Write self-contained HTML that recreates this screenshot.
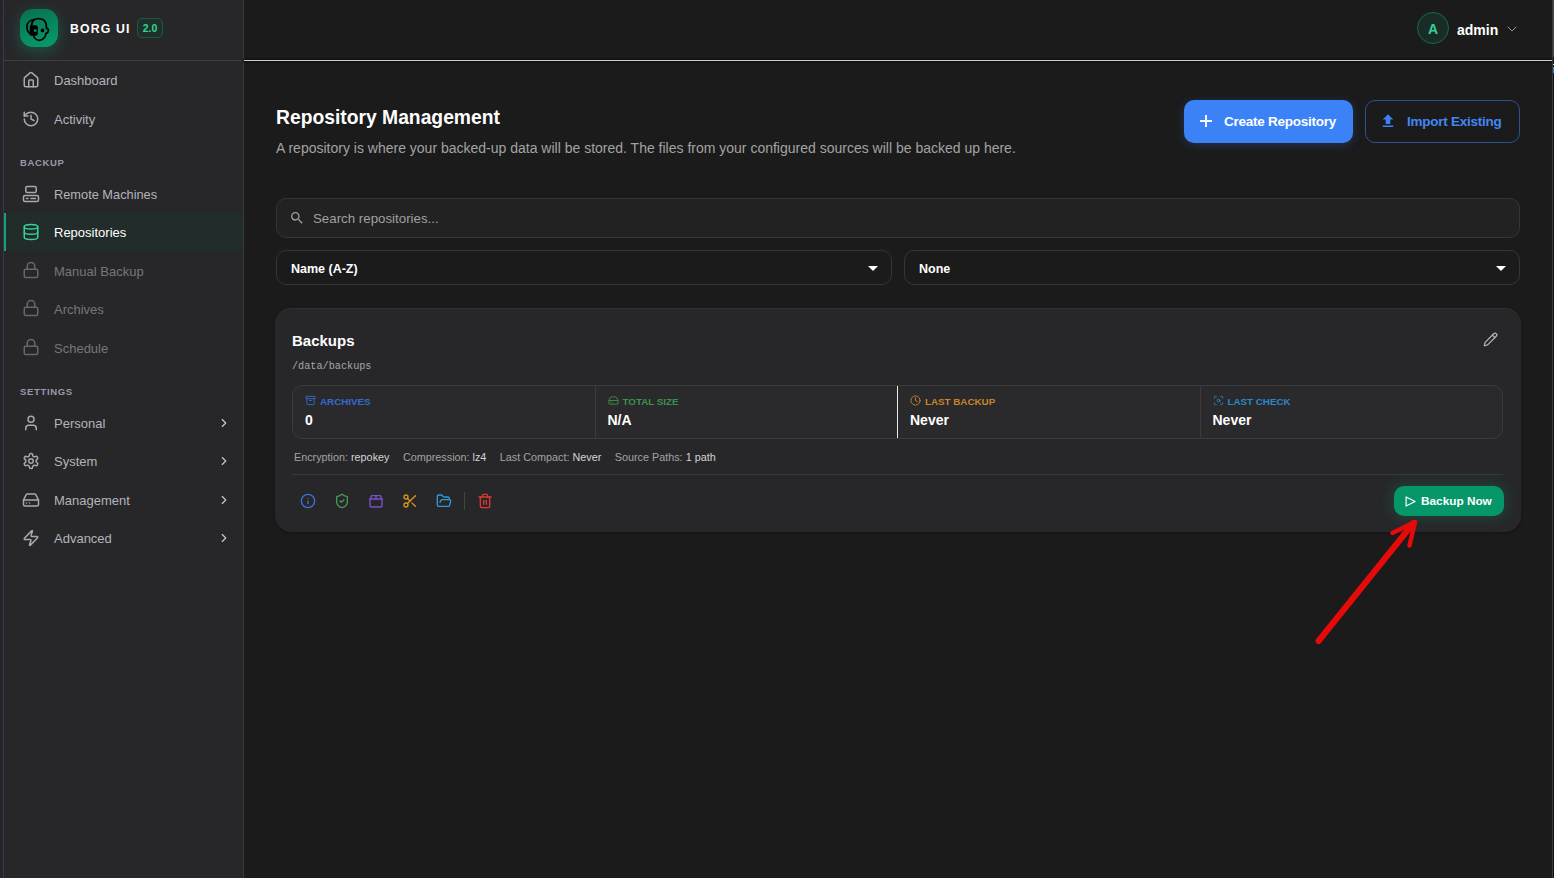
<!DOCTYPE html>
<html><head><meta charset="utf-8">
<style>
*{box-sizing:border-box;margin:0;padding:0}
html,body{width:1554px;height:878px;overflow:hidden;background:#1b1b1b;font-family:"Liberation Sans",sans-serif;color:#e5e5e5}
.abs{position:absolute}
#strip{left:0;top:0;width:3px;height:878px;background:#26252e}
#sidebar{left:3px;top:0;width:241px;height:878px;background:#27272a;border-left:1px solid #3a3a40;border-right:1px solid #3b3b3e}
#sbline{left:4px;top:60px;width:239px;height:1px;background:#3e3e42}
.logo{left:20px;top:9px;width:38px;height:38px;border-radius:12.5px;background:linear-gradient(160deg,#07704f,#079d6d);box-shadow:0 4px 14px 1px rgba(16,170,115,.3)}
.brand{left:70px;top:22px;font-size:12.3px;font-weight:700;letter-spacing:1.15px;color:#fff;line-height:14px}
.badge{left:137px;top:18px;width:26px;height:20px;border-radius:5px;background:#1f302b;border:1px solid #1d5a44;color:#34d399;font-size:10.5px;font-weight:700;text-align:center;line-height:18px}
.nav{left:4px;width:239px;height:38px;display:flex;align-items:center}
.nav svg{position:absolute;left:18px;top:10px;width:18px;height:18px;fill:none;stroke:#a8a8ad;stroke-width:2;stroke-linecap:round;stroke-linejoin:round}
.nav span{position:absolute;left:50px;font-size:13px;color:#b4b4bb;white-space:nowrap}
.nav.dis span{color:#76767a}
.nav.dis svg{stroke:#67676b;top:9px}
.nav.sel{background:#222c2b;border-left:2px solid #10a674}
.nav.sel span{color:#fff}
.nav.sel svg{stroke:#34d399}
.nav svg.chev{position:absolute;left:213px;top:12px;width:14px;height:14px;stroke:#c8c8cc}
.sect{left:20px;font-size:9.5px;font-weight:700;letter-spacing:.65px;color:#9a9aa8}
#topline{left:244px;top:60px;width:1308px;height:1px;background:#cfcfcf;box-shadow:0 0 2px 1px #0e0e0e}


.avatar{left:1417px;top:12px;width:32px;height:32px;border-radius:50%;background:#1a2c27;border:1px solid #15694f;color:#34d399;font-weight:700;font-size:14px;text-align:center;line-height:32px}
.uname{left:1457px;top:22px;font-size:14px;font-weight:700;color:#fff;line-height:16px}
.title{left:276px;top:107px;font-size:19.3px;font-weight:700;color:#fff;line-height:22px;white-space:nowrap}
.subtitle{left:276px;top:140px;font-size:14px;color:#a3a3a3;line-height:16px;white-space:nowrap}
.btn-create{left:1184px;top:100px;width:169px;height:43px;border-radius:10px;background:#3b82f6;box-shadow:0 2px 10px rgba(59,130,246,.25)}
.btn-create svg{position:absolute;left:16px;top:15px;width:12px;height:12px}
.btn-create span{position:absolute;left:40px;top:14px;font-size:13.5px;letter-spacing:-.25px;font-weight:700;color:#fff;line-height:16px;white-space:nowrap}
.btn-import{left:1365px;top:100px;width:155px;height:43px;border-radius:10px;border:1px solid #2d5294}
.btn-import svg{position:absolute;left:13px;top:11px;width:18px;height:18px}
.btn-import span{position:absolute;left:41px;top:13px;font-size:13.5px;letter-spacing:-.25px;font-weight:700;color:#4287f5;line-height:16px;white-space:nowrap}
.search{left:276px;top:198px;width:1244px;height:40px;border-radius:10px;background:#222;border:1px solid #353535}
.search svg{position:absolute;left:12px;top:11px;width:16px;height:16px}
.search span{position:absolute;left:36px;top:12px;font-size:13.3px;color:#a0a0a0;line-height:16px}
.sel1,.sel2{top:250px;width:616px;height:35px;border-radius:10px;border:1px solid #353535}
.sel1{left:276px}.sel2{left:904px}
.sel1 span,.sel2 span{position:absolute;left:14px;top:11px;font-size:12.5px;font-weight:700;color:#fff;line-height:14px}
.sel1 svg,.sel2 svg{position:absolute;right:6px;top:5px;width:24px;height:24px}

.card{left:275px;top:308px;width:1246px;height:224px;border-radius:16px;background:#27272a;box-shadow:inset 0 1px 0 #303033,0 1px 3px rgba(0,0,0,.3)}
.cname{left:292px;top:332px;font-size:15px;font-weight:700;color:#fff;line-height:17px}
.cpath{left:292px;top:361px;font-family:"Liberation Mono",monospace;font-size:10.2px;color:#a8a8a8;line-height:12px}
.stats{left:292px;top:385px;width:1211px;height:54px;border-radius:10px;border:1px solid #3a3a3d;display:flex;background:#2a2a2d}
.stats .col{flex:1;position:relative;border-left:1px solid #3a3a3d}
.stats .col:first-child{border-left:none}
.stats .col.c3{border-left:1px solid #e8e8e8}
.lbl{position:absolute;left:12px;top:9.5px;font-size:9.8px;font-weight:700;letter-spacing:0;line-height:12px;white-space:nowrap;padding-left:15px}
.lbl svg{position:absolute;left:0;top:-1px;width:11px;height:11px;fill:none;stroke-width:2;stroke-linecap:round;stroke-linejoin:round}
.val{position:absolute;left:12px;top:26px;font-size:14px;font-weight:700;color:#fff;line-height:16px}
.meta{left:294px;top:451px;font-size:10.8px;color:#a3a3a3;line-height:13px;white-space:nowrap}
.meta b{color:#d4d4d4;font-weight:400}
.meta i{display:inline-block;width:13.5px}
.cdiv{left:292px;top:474px;width:1211px;height:1px;background:#38383b}
.icons{left:300px;top:493px;width:200px;height:18px}
.icons svg{position:absolute;top:0;width:16px;height:16px;fill:none;stroke-width:2;stroke-linecap:round;stroke-linejoin:round}
.vsep{position:absolute;left:164px;top:-1px;width:1px;height:18px;background:#444}
.btn-backup{left:1394px;top:486px;width:110px;height:30px;border-radius:10px;background:#059669;box-shadow:0 0 14px 2px rgba(16,185,129,.2)}
.btn-backup svg{position:absolute;left:11px;top:9.5px;width:11px;height:11px}
.btn-backup span{position:absolute;left:27px;top:8px;font-size:11.8px;font-weight:700;color:#fff;line-height:14px;white-space:nowrap}
</style></head>
<body>
<div id="strip" class="abs"></div>
<div id="sidebar" class="abs"></div>
<div id="sbline" class="abs"></div>
<div class="abs logo"></div>
<svg class="abs" style="left:22px;top:11px;width:34px;height:34px" viewBox="0 0 34 34" fill="none" stroke="#000" stroke-width="1.7" stroke-linecap="round" stroke-linejoin="round">
<path d="M11.5 9.2C13.5 7.6 17 7.3 19.5 8C23 9 24.4 12 24.4 15.5L24.4 17.3C25.8 17.3 26.4 18.5 26.4 19.5C26.4 21 25.4 22 24 22.4C23.4 26 21 29.2 17 29.4C14.5 29 12.6 27.5 11.6 25"/>
<path d="M12.5 8.6C8 9 4.9 11.8 4.9 15.6C4.9 19 6.5 22 9 23.6"/>
<path d="M11.3 9.4C10 10.8 9.6 13 9.7 15.5"/>
<path d="M8.6 15.2H13.6C14.6 15.2 15 15.8 15 16.6V22.6C15 23.5 14.5 24 13.6 24H9.4C8.8 24 8.5 23.5 8.5 22.8Z" fill="#000"/>
<circle cx="20.5" cy="19.4" r="1.1" fill="#000"/>
</svg>
<svg class="abs" style="left:22px;top:11px;width:34px;height:34px" viewBox="0 0 34 34"><circle cx="13.2" cy="19.4" r="1.5" fill="#07865c"/></svg>
<div class="abs brand">BORG UI</div>
<div class="abs badge">2.0</div>

<div class="abs nav" style="top:61px"><svg viewBox="0 0 24 24"><path d="M15 21v-8a1 1 0 0 0-1-1h-4a1 1 0 0 0-1 1v8"/><path d="M3 10a2 2 0 0 1 .709-1.528l7-5.999a2 2 0 0 1 2.582 0l7 5.999A2 2 0 0 1 21 10v9a2 2 0 0 1-2 2H5a2 2 0 0 1-2-2z"/></svg><span>Dashboard</span></div>
<div class="abs nav" style="top:100px"><svg viewBox="0 0 24 24"><path d="M3 12a9 9 0 1 0 9-9 9.75 9.75 0 0 0-6.74 2.74L3 8"/><path d="M3 3v5h5"/><path d="M12 7v5l4 2"/></svg><span>Activity</span></div>
<div class="abs sect" style="top:156.5px">BACKUP</div>
<div class="abs nav" style="top:175px"><svg viewBox="0 0 24 24"><rect width="14" height="8" x="5" y="2" rx="2"/><rect width="20" height="8" x="2" y="14" rx="2"/><path d="M6 18h2"/><path d="M12 18h6"/></svg><span style="font-size:12.8px">Remote Machines</span></div>
<div class="abs nav sel" style="top:213px"><svg viewBox="0 0 24 24" style="left:16px"><ellipse cx="12" cy="5" rx="9" ry="3"/><path d="M3 5V19A9 3 0 0 0 21 19V5"/><path d="M3 12A9 3 0 0 0 21 12"/></svg><span style="left:48px">Repositories</span></div>
<div class="abs nav dis" style="top:252px"><svg viewBox="0 0 24 24"><rect width="18" height="11" x="3" y="11" rx="2" ry="2"/><path d="M7 11V7a5 5 0 0 1 10 0v4"/></svg><span>Manual Backup</span></div>
<div class="abs nav dis" style="top:290px"><svg viewBox="0 0 24 24"><rect width="18" height="11" x="3" y="11" rx="2" ry="2"/><path d="M7 11V7a5 5 0 0 1 10 0v4"/></svg><span>Archives</span></div>
<div class="abs nav dis" style="top:329px"><svg viewBox="0 0 24 24"><rect width="18" height="11" x="3" y="11" rx="2" ry="2"/><path d="M7 11V7a5 5 0 0 1 10 0v4"/></svg><span>Schedule</span></div>
<div class="abs sect" style="top:385.5px">SETTINGS</div>
<div class="abs nav" style="top:404px"><svg viewBox="0 0 24 24"><path d="M19 21v-2a4 4 0 0 0-4-4H9a4 4 0 0 0-4 4v2"/><circle cx="12" cy="7" r="4"/></svg><span>Personal</span><svg class="chev" viewBox="0 0 24 24"><path d="m9 18 6-6-6-6"/></svg></div>
<div class="abs nav" style="top:442px"><svg viewBox="0 0 24 24"><path d="M12.22 2h-.44a2 2 0 0 0-2 2v.18a2 2 0 0 1-1 1.73l-.43.25a2 2 0 0 1-2 0l-.15-.08a2 2 0 0 0-2.73.73l-.22.38a2 2 0 0 0 .73 2.73l.15.1a2 2 0 0 1 1 1.72v.51a2 2 0 0 1-1 1.74l-.15.09a2 2 0 0 0-.73 2.73l.22.38a2 2 0 0 0 2.73.73l.15-.08a2 2 0 0 1 2 0l.43.25a2 2 0 0 1 1 1.73V20a2 2 0 0 0 2 2h.44a2 2 0 0 0 2-2v-.18a2 2 0 0 1 1-1.73l.43-.25a2 2 0 0 1 2 0l.15.08a2 2 0 0 0 2.73-.73l.22-.39a2 2 0 0 0-.73-2.73l-.15-.08a2 2 0 0 1-1-1.74v-.5a2 2 0 0 1 1-1.74l.15-.09a2 2 0 0 0 .73-2.73l-.22-.38a2 2 0 0 0-2.73-.73l-.15.08a2 2 0 0 1-2 0l-.43-.25a2 2 0 0 1-1-1.73V4a2 2 0 0 0-2-2z"/><circle cx="12" cy="12" r="3"/></svg><span>System</span><svg class="chev" viewBox="0 0 24 24"><path d="m9 18 6-6-6-6"/></svg></div>
<div class="abs nav" style="top:481px"><svg viewBox="0 0 24 24"><line x1="22" x2="2" y1="12" y2="12"/><path d="M5.45 5.11 2 12v6a2 2 0 0 0 2 2h16a2 2 0 0 0 2-2v-6l-3.45-6.89A2 2 0 0 0 16.76 4H7.24a2 2 0 0 0-1.79 1.11z"/><line x1="6" x2="6.01" y1="16" y2="16"/><line x1="10" x2="10.01" y1="16" y2="16"/></svg><span>Management</span><svg class="chev" viewBox="0 0 24 24"><path d="m9 18 6-6-6-6"/></svg></div>
<div class="abs nav" style="top:519px"><svg viewBox="0 0 24 24"><path d="M4 14a1 1 0 0 1-.78-1.63l9.9-10.2a.5.5 0 0 1 .86.46l-1.92 6.02A1 1 0 0 0 13 10h7a1 1 0 0 1 .78 1.63l-9.9 10.2a.5.5 0 0 1-.86-.46l1.92-6.02A1 1 0 0 0 11 14z"/></svg><span>Advanced</span><svg class="chev" viewBox="0 0 24 24"><path d="m9 18 6-6-6-6"/></svg></div>


<!-- header -->
<div class="abs avatar">A</div>
<div class="abs uname">admin</div>
<svg class="abs" style="left:1506px;top:23px;width:12px;height:12px" viewBox="0 0 24 24" fill="none" stroke="#9a9a9a" stroke-width="2" stroke-linecap="round" stroke-linejoin="round"><path d="m4 8 8 8 8-8"/></svg>

<!-- title -->
<div class="abs title">Repository Management</div>
<div class="abs subtitle">A repository is where your backed-up data will be stored. The files from your configured sources will be backed up here.</div>
<div class="abs btn-create"><svg viewBox="0 0 12 12" fill="none" stroke="#f4f6ff" stroke-width="2"><path d="M6 0v12M0 6h12"/></svg><span>Create Repository</span></div>
<div class="abs btn-import"><svg viewBox="0 0 24 24" fill="#3b82f6"><path d="M9 16h6v-6h4l-7-7-7 7h4zm-4 2h14v2H5z"/></svg><span>Import Existing</span></div>

<div class="abs search"><svg viewBox="0 0 24 24" fill="#9a9a9a"><path d="M15.5 14h-.79l-.28-.27A6.47 6.47 0 0 0 16 9.5 6.5 6.5 0 1 0 9.5 16c1.61 0 3.09-.59 4.23-1.57l.27.28v.79l5 4.99L20.49 19zm-6 0C7.01 14 5 11.99 5 9.5S7.01 5 9.5 5 14 7.01 14 9.5 11.99 14 9.5 14"/></svg><span>Search repositories...</span></div>
<div class="abs sel1"><span>Name (A-Z)</span><svg viewBox="0 0 24 24" fill="#fff"><path d="M7 10l5 5 5-5z"/></svg></div>
<div class="abs sel2"><span>None</span><svg viewBox="0 0 24 24" fill="#fff"><path d="M7 10l5 5 5-5z"/></svg></div>

<!-- card -->
<div class="abs card"></div>
<div class="abs cname">Backups</div>
<div class="abs cpath">/data/backups</div>
<svg class="abs" style="left:1482.5px;top:331.5px;width:15px;height:15px" viewBox="0 0 24 24" fill="none" stroke="#b4b4b4" stroke-width="2" stroke-linecap="round" stroke-linejoin="round"><path d="M21.174 6.812a1 1 0 0 0-3.986-3.987L3.842 16.174a2 2 0 0 0-.5.83l-1.321 4.352a.5.5 0 0 0 .623.622l4.353-1.32a2 2 0 0 0 .83-.497z"/><path d="m15 5 4 4"/></svg>
<div class="abs stats">
  <div class="col"><div class="lbl" style="color:#3769cf"><svg viewBox="0 0 24 24" stroke="#3769cf"><rect width="20" height="5" x="2" y="3" rx="1"/><path d="M4 8v11a2 2 0 0 0 2 2h12a2 2 0 0 0 2-2V8"/><path d="M10 12h4"/></svg>ARCHIVES</div><div class="val">0</div></div>
  <div class="col"><div class="lbl" style="color:#3e904a"><svg viewBox="0 0 24 24" stroke="#3e904a"><line x1="22" x2="2" y1="12" y2="12"/><path d="M5.45 5.11 2 12v6a2 2 0 0 0 2 2h16a2 2 0 0 0 2-2v-6l-3.45-6.89A2 2 0 0 0 16.76 4H7.24a2 2 0 0 0-1.79 1.11z"/><line x1="6" x2="6.01" y1="16" y2="16"/><line x1="10" x2="10.01" y1="16" y2="16"/></svg>TOTAL SIZE</div><div class="val">N/A</div></div>
  <div class="col c3"><div class="lbl" style="color:#c98524"><svg viewBox="0 0 24 24" stroke="#c98524"><circle cx="12" cy="12" r="10"/><path d="M12 6v6l4 2"/></svg>LAST BACKUP</div><div class="val">Never</div></div>
  <div class="col"><div class="lbl" style="color:#2c88c8"><svg viewBox="0 0 24 24" stroke="#2c88c8"><path d="M3 7V5a2 2 0 0 1 2-2h2"/><path d="M17 3h2a2 2 0 0 1 2 2v2"/><path d="M21 17v2a2 2 0 0 1-2 2h-2"/><path d="M7 21H5a2 2 0 0 1-2-2v-2"/><circle cx="12" cy="12" r="3"/><path d="m16 16-1.9-1.9"/></svg>LAST CHECK</div><div class="val">Never</div></div>
</div>
<div class="abs meta"><span class="k">Encryption:</span> <b>repokey</b><i></i><span class="k">Compression:</span> <b>lz4</b><i></i><span class="k">Last Compact:</span> <b>Never</b><i></i><span class="k">Source Paths:</span> <b>1 path</b></div>
<div class="abs cdiv"></div>
<div class="abs icons">
<svg style="left:0" viewBox="0 0 24 24" stroke="#3a72d8"><circle cx="12" cy="12" r="10"/><path d="M12 16v-4"/><path d="M12 8h.01"/></svg>
<svg style="left:34px" viewBox="0 0 24 24" stroke="#4a9a55"><path d="M20 13c0 5-3.5 7.5-7.66 8.95a1 1 0 0 1-.67-.01C7.5 20.5 4 18 4 13V6a1 1 0 0 1 1-1c2 0 4.5-1.2 6.24-2.72a1.17 1.17 0 0 1 1.52 0C14.51 3.81 17 5 19 5a1 1 0 0 1 1 1z"/><path d="m9 12 2 2 4-4"/></svg>
<svg style="left:68px" viewBox="0 0 24 24" stroke="#7c50c8"><path d="M3 9h18v10a2 2 0 0 1-2 2H5a2 2 0 0 1-2-2z"/><path d="M3 9l2.5-5h13L21 9"/><path d="M12 4v5"/></svg>
<svg style="left:102px" viewBox="0 0 24 24" stroke="#d8951c"><circle cx="6" cy="6" r="3"/><path d="M8.12 8.12 12 12"/><path d="M20 4 8.12 15.88"/><circle cx="6" cy="18" r="3"/><path d="M14.8 14.8 20 20"/></svg>
<svg style="left:136px" viewBox="0 0 24 24" stroke="#2d9ad6"><path d="m6 14 1.5-2.9A2 2 0 0 1 9.24 10H20a2 2 0 0 1 1.94 2.5l-1.54 6a2 2 0 0 1-1.95 1.5H4a2 2 0 0 1-2-2V5a2 2 0 0 1 2-2h3.9a2 2 0 0 1 1.69.9l.81 1.2a2 2 0 0 0 1.67.9H18a2 2 0 0 1 2 2v2"/></svg>
<div class="vsep"></div>
<svg style="left:177px" viewBox="0 0 24 24" stroke="#d83a30"><path d="M3 6h18"/><path d="M19 6v14c0 1-1 2-2 2H7c-1 0-2-1-2-2V6"/><path d="M8 6V4c0-1 1-2 2-2h4c1 0 2 1 2 2v2"/><line x1="10" x2="10" y1="11" y2="17"/><line x1="14" x2="14" y1="11" y2="17"/></svg>
</div>
<div class="abs btn-backup"><svg viewBox="0 0 12 12" fill="none" stroke="#fff" stroke-width="1.3" stroke-linejoin="round"><polygon points="1.2 1 11 6 1.2 11"/></svg><span>Backup Now</span></div>

<!-- arrow -->
<svg class="abs" style="left:0;top:0;width:1554px;height:878px;pointer-events:none" viewBox="0 0 1554 878"><g stroke="#e60a0a" stroke-linecap="round" stroke-linejoin="round" fill="none"><path d="M1318.5 641 L1413.5 523" stroke-width="6"/><path d="M1392.5 533 L1415 522 L1409.5 545.5" stroke-width="4.5"/></g></svg>
<div id="topline" class="abs"></div>
<div class="abs" style="left:1552px;top:0;width:1px;height:878px;background:#3a3a3a"></div>
<div class="abs" style="left:1553px;top:0;width:1px;height:57px;background:#474747"></div>
<div class="abs" style="left:1553px;top:57px;width:1px;height:821px;background:#121212"></div>
<div class="abs" style="left:1553px;top:64px;width:1px;height:1px;background:#d8d8c0"></div>
<div class="abs" style="left:1553px;top:67px;width:1px;height:6px;background:#2a7fd0"></div>
</body></html>
